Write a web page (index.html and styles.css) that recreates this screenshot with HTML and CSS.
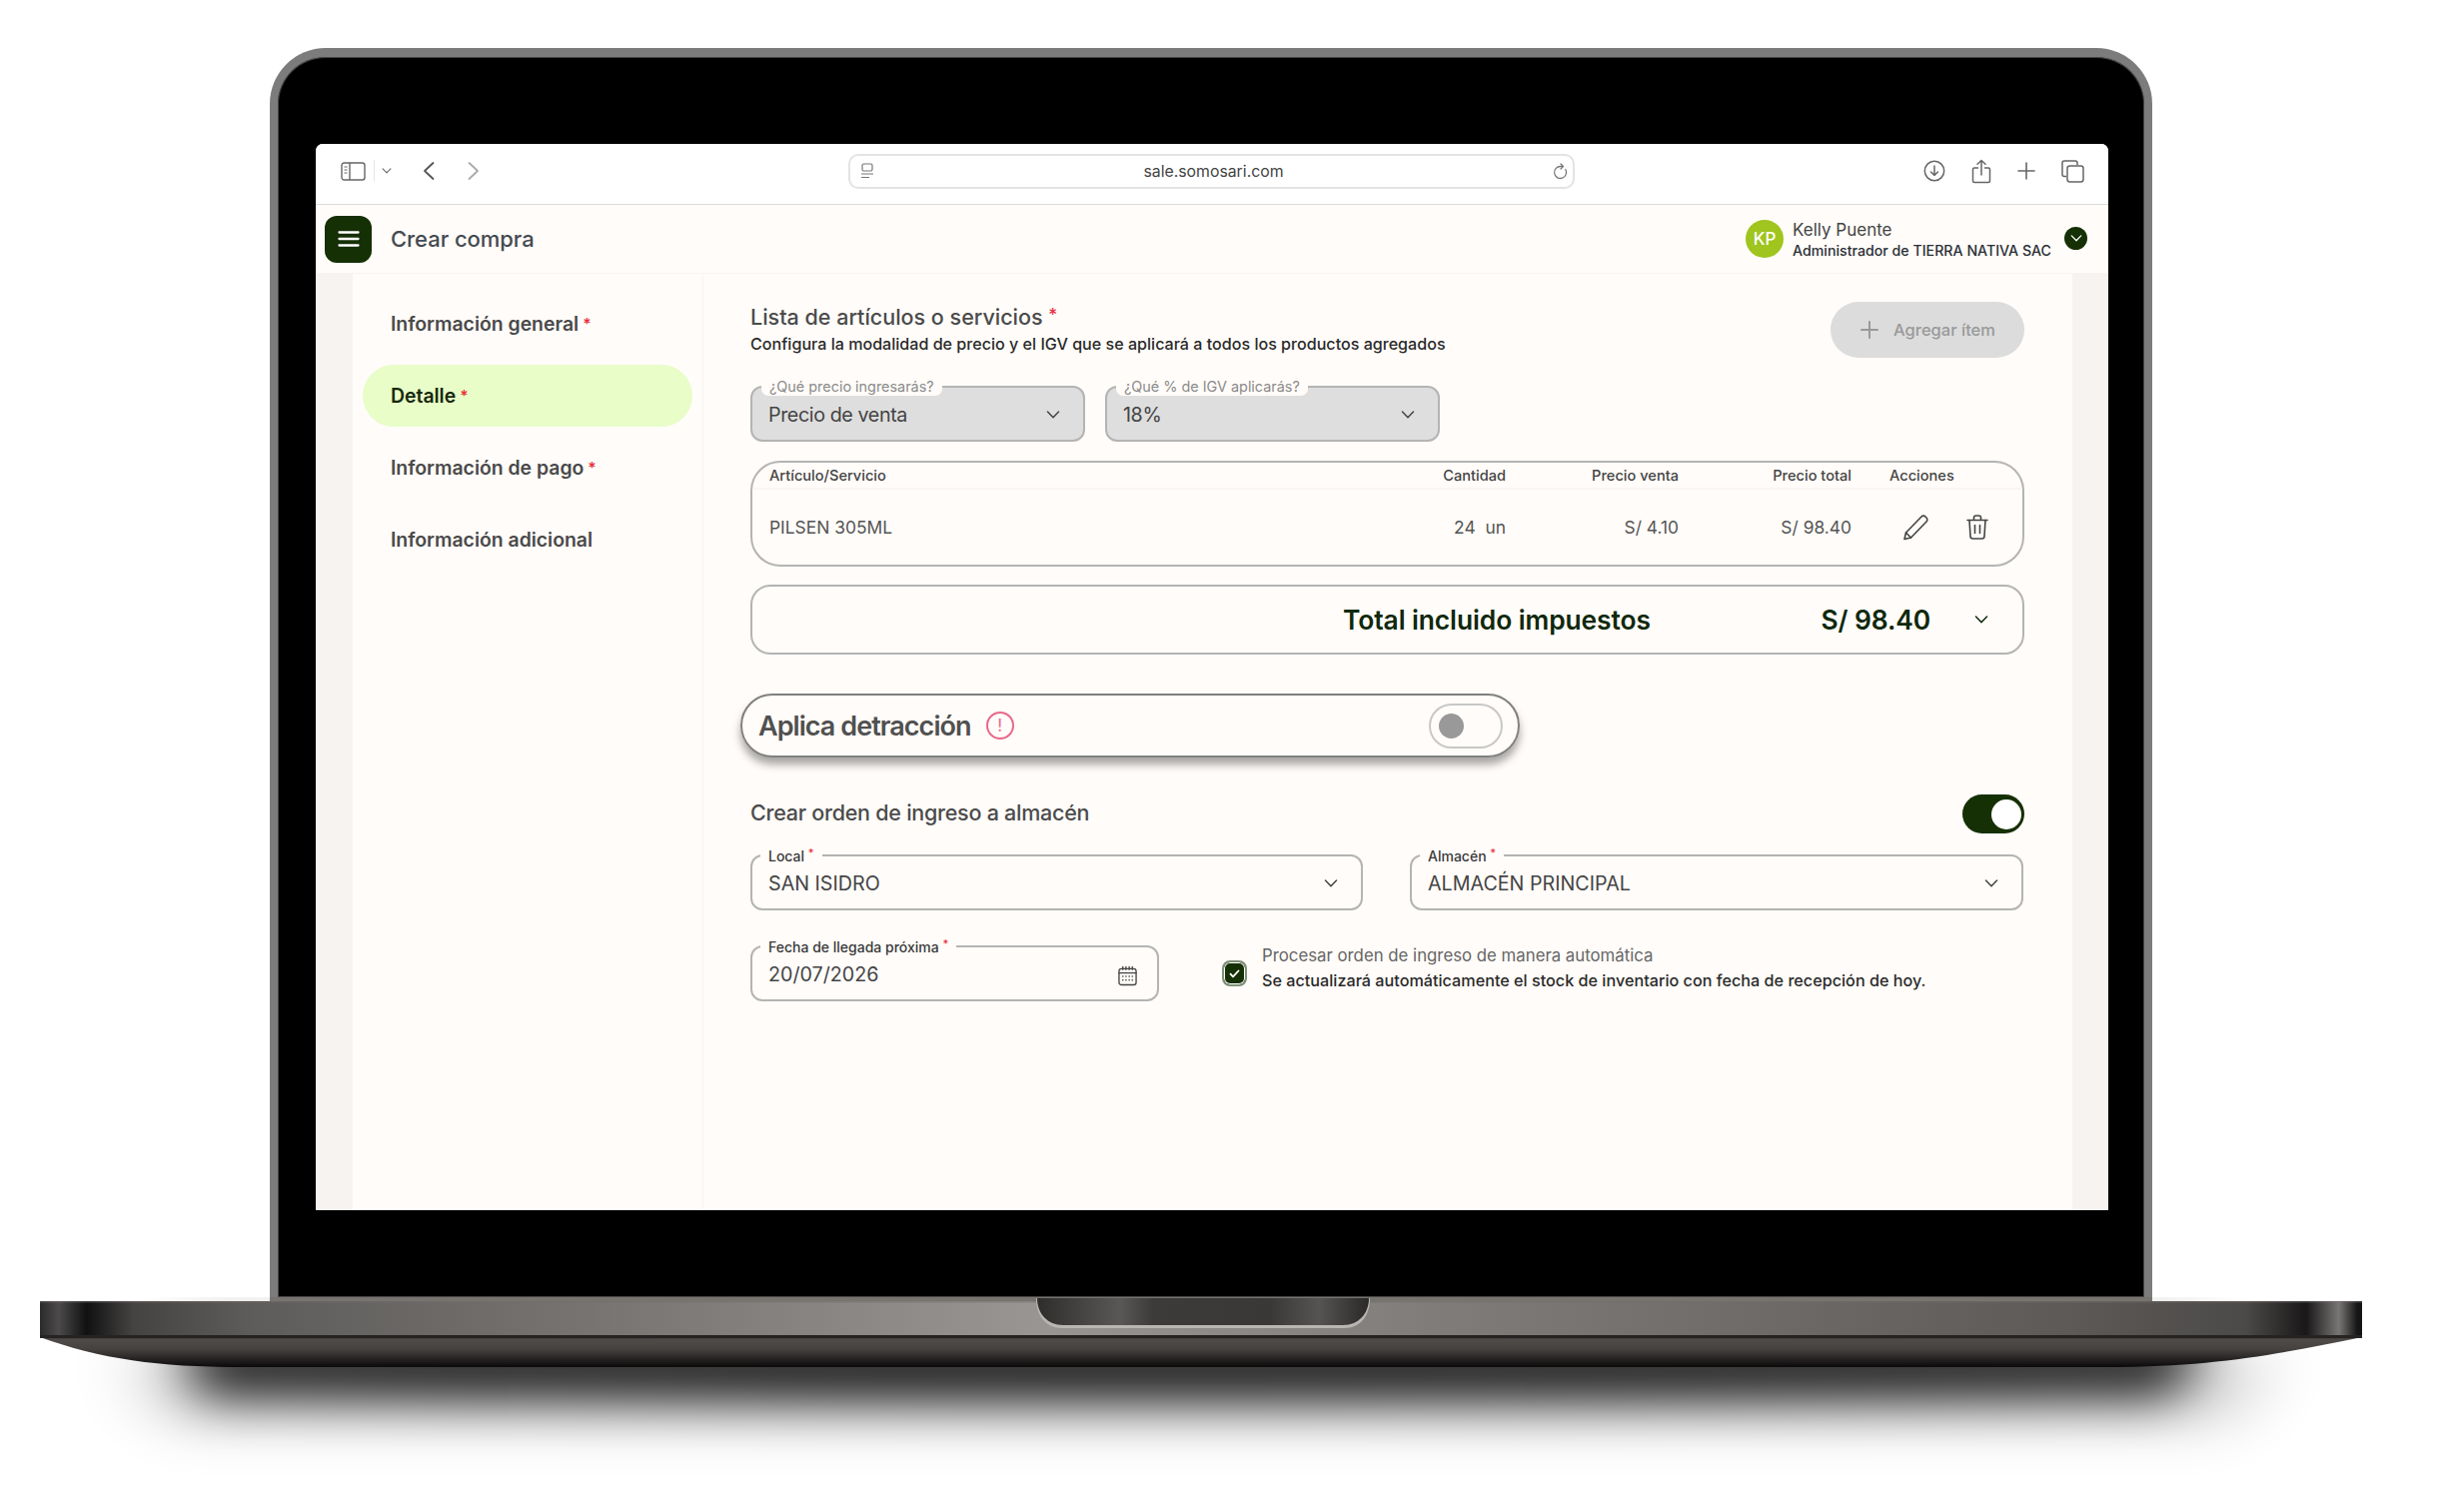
FILE: index.html
```html
<!DOCTYPE html>
<html lang="es">
<head>
    <meta charset="UTF-8">
    <title>Crear compra</title>
    <link rel="stylesheet" href="styles.css">
</head>
<body>

<svg class="defs" width="0" height="0">
    <symbol id="chev" viewBox="0 0 14 8"><path d="M1.5 1 7 6.7 12.5 1" fill="none" stroke="currentColor" stroke-width="1.5" stroke-linecap="round" stroke-linejoin="round"/></symbol>
</svg>

<div class="stage">
    <div class="lid">
        <div class="screen">

            <!-- Barra del navegador -->
            <div class="browser-bar">
                <div class="browser-left">
                    <svg class="icon-sidebar" width="25" height="19" viewBox="0 0 25 19" fill="none" stroke="#666" stroke-width="1.4"><rect x="1" y="1" width="23" height="17" rx="2.5"/><path d="M9 1v17"/><path d="M3.5 5h3M3.5 8h3M3.5 11h3" stroke-width="1.2"/></svg>
                    <span class="browser-sep"></span>
                    <svg class="icon-small-chev" width="10" height="6"><use href="#chev"/></svg>
                    <svg class="icon-back" width="12" height="20" viewBox="0 0 12 20" fill="none" stroke="#555" stroke-width="1.8" stroke-linecap="round" stroke-linejoin="round"><path d="M10.5 2 2 10l8.5 8"/></svg>
                    <svg class="icon-forward" width="12" height="20" viewBox="0 0 12 20" fill="none" stroke="#aaa" stroke-width="1.8" stroke-linecap="round" stroke-linejoin="round"><path d="M1.5 2 10 10l-8.5 8"/></svg>
                </div>
                <div class="url-bar">
                    <svg width="14" height="16" viewBox="0 0 14 16" fill="none" stroke="#777" stroke-width="1.2"><rect x="2" y="1" width="10" height="7" rx="1.5"/><path d="M1 11h12M1 14.5h8"/></svg>
                    <span class="url-text">sale.somosari.com</span>
                    <svg width="16" height="17" viewBox="0 0 16 17" fill="none" stroke="#777" stroke-width="1.3" stroke-linecap="round" stroke-linejoin="round"><path d="M12.8 6.5A6 6 0 1 1 8 3.5h2"/><path d="M8 1l2.5 2.5L8 6"/></svg>
                </div>
                <div class="browser-right">
                    <svg width="22" height="22" viewBox="0 0 22 22" fill="none" stroke="#666" stroke-width="1.5" stroke-linecap="round" stroke-linejoin="round"><circle cx="11" cy="11" r="9.7"/><path d="M11 6v9.5M7.5 12 11 15.5 14.5 12"/></svg>
                    <svg width="20" height="25" viewBox="0 0 20 25" fill="none" stroke="#666" stroke-width="1.5" stroke-linecap="round" stroke-linejoin="round"><path d="M6.5 9H3a1.5 1.5 0 0 0-1.5 1.5v11.5A1.5 1.5 0 0 0 3 23.5h14a1.5 1.5 0 0 0 1.5-1.5V10.5A1.5 1.5 0 0 0 17 9h-3.5"/><path d="M10 16V1.5M6 5.2l4-3.7 4 3.7"/></svg>
                    <svg width="18" height="18" viewBox="0 0 18 18" fill="none" stroke="#666" stroke-width="1.6" stroke-linecap="round"><path d="M9 1v16M1 9h16"/></svg>
                    <svg width="23" height="23" viewBox="0 0 23 23" fill="none" stroke="#666" stroke-width="1.5"><path d="M5 16.5H3a2 2 0 0 1-2-2V3a2 2 0 0 1 2-2h11a2 2 0 0 1 2 2v2"/><rect x="6" y="6" width="16" height="16" rx="2.5"/></svg>
                </div>
            </div>

            <!-- Encabezado -->
            <header class="app-header">
                <button class="menu-btn">
                    <svg width="22" height="18" viewBox="0 0 22 18" stroke="#fff" stroke-width="2.3" stroke-linecap="round"><path d="M1.5 2.5h19M1.5 9h19M1.5 15.5h19"/></svg>
                </button>
                <h1 class="page-title">Crear compra</h1>
                <div class="user">
                    <div class="avatar">KP</div>
                    <div class="user-info">
                        <div class="user-name">Kelly Puente</div>
                        <div class="user-role">Administrador de TIERRA NATIVA SAC</div>
                    </div>
                    <div class="user-chev"><svg width="12" height="7"><use href="#chev"/></svg></div>
                </div>
            </header>

            <div class="app-body">
                <nav class="sidebar">
                    <a class="nav-item">Información general <span class="req">*</span></a>
                    <a class="nav-item active">Detalle <span class="req">*</span></a>
                    <a class="nav-item">Información de pago <span class="req">*</span></a>
                    <a class="nav-item">Información adicional</a>
                </nav>

                <main class="main">
                    <div class="list-head">
                        <div class="list-text">
                            <h2 class="section-title">Lista de artículos o servicios <span class="req">*</span></h2>
                            <p class="section-sub">Configura la modalidad de precio y el IGV que se aplicará a todos los productos agregados</p>
                        </div>
                        <button class="add-btn">
                            <svg width="20" height="20" viewBox="0 0 20 20" stroke="#999" stroke-width="2" stroke-linecap="round"><path d="M10 2v16M2 10h16"/></svg>
                            Agregar ítem
                        </button>
                    </div>

                    <div class="price-selects">
                        <div class="field field-off">
                            <span class="field-label">¿Qué precio ingresarás?</span>
                            <span class="field-value">Precio de venta</span>
                            <svg class="chev" width="14" height="8"><use href="#chev"/></svg>
                        </div>
                        <div class="field field-off">
                            <span class="field-label">¿Qué % de IGV aplicarás?</span>
                            <span class="field-value">18%</span>
                            <svg class="chev" width="14" height="8"><use href="#chev"/></svg>
                        </div>
                    </div>

                    <div class="items">
                        <div class="items-row items-head">
                            <span>Artículo/Servicio</span>
                            <span class="num">Cantidad</span>
                            <span class="num">Precio venta</span>
                            <span class="num">Precio total</span>
                            <span class="col-actions">Acciones</span>
                        </div>
                        <div class="items-row items-line">
                            <span>PILSEN 305ML</span>
                            <span class="num">24&nbsp; un</span>
                            <span class="num">S/ 4.10</span>
                            <span class="num">S/ 98.40</span>
                            <span class="col-actions actions">
                                <svg width="27" height="26" viewBox="0 0 27 26" fill="none" stroke="#444" stroke-width="1.6" stroke-linecap="round" stroke-linejoin="round"><path d="M2 24.5 3.5 18 19 2a2.8 2.8 0 0 1 4 0l1 1a2.8 2.8 0 0 1 0 4L8.5 23Z"/><path d="m3.5 18 5 5"/></svg>
                                <svg width="22" height="25" viewBox="0 0 22 25" fill="none" stroke="#444" stroke-width="1.6" stroke-linecap="round" stroke-linejoin="round"><path d="M1 5.5h20M7.5 5.5V3a2 2 0 0 1 2-2h3a2 2 0 0 1 2 2v2.5"/><path d="M3 5.5 4 21.5A2.5 2.5 0 0 0 6.5 24h9a2.5 2.5 0 0 0 2.5-2.5l1-16"/><path d="M8.5 10.5v8M13.5 10.5v8"/></svg>
                            </span>
                        </div>
                    </div>

                    <div class="total">
                        <span class="total-label">Total incluido impuestos</span>
                        <span class="total-value">S/ 98.40</span>
                        <svg width="14" height="8"><use href="#chev"/></svg>
                    </div>

                    <div class="detraction">
                        <span class="detraction-label">Aplica detracción</span>
                        <span class="alert-icon">!</span>
                        <span class="switch-off"><span></span></span>
                    </div>

                    <div class="order-head">
                        <h2 class="section-title order-title">Crear orden de ingreso a almacén</h2>
                        <span class="switch-on"><span></span></span>
                    </div>

                    <div class="place-row">
                        <div class="field">
                            <span class="field-label label-dark">Local <span class="req">*</span></span>
                            <span class="field-value">SAN ISIDRO</span>
                            <svg class="chev" width="14" height="8"><use href="#chev"/></svg>
                        </div>
                        <div class="field">
                            <span class="field-label label-dark">Almacén <span class="req">*</span></span>
                            <span class="field-value">ALMACÉN PRINCIPAL</span>
                            <svg class="chev" width="14" height="8"><use href="#chev"/></svg>
                        </div>
                    </div>

                    <div class="date-row">
                        <div class="field field-date">
                            <span class="field-label label-dark">Fecha de llegada próxima <span class="req">*</span></span>
                            <span class="field-value">20/07/2026</span>
                            <svg class="calendar" width="19" height="21" viewBox="0 0 20 21" fill="none" stroke="#444" stroke-width="1.4" stroke-linecap="round"><rect x="1" y="3" width="18" height="17" rx="2.5"/><path d="M1 7.5h18"/><path d="M5 1v3M8.3 1v3M11.7 1v3M15 1v3"/><path d="M5 11h.1M8.3 11h.1M11.7 11h.1M15 11h.1M5 15h.1M8.3 15h.1M11.7 15h.1M15 15h.1" stroke-width="1.7"/></svg>
                        </div>
                        <div class="auto-check">
                            <span class="checkbox"><svg width="11" height="9" viewBox="0 0 11 9" fill="none" stroke="#fff" stroke-width="1.8" stroke-linecap="round" stroke-linejoin="round"><path d="M1.5 4.7 4 7.3 9.5 1.5"/></svg></span>
                            <div class="auto-text">
                                <div class="auto-title">Procesar orden de ingreso de manera automática</div>
                                <div class="auto-sub">Se actualizará automáticamente el stock de inventario con fecha de recepción de hoy.</div>
                            </div>
                        </div>
                    </div>
                </main>
            </div>
        </div>
    </div>

    <!-- Base del portátil y sombra (coordenadas de la página) -->
    <svg class="base" width="2466" height="214" viewBox="0 1298 2466 214">
        <defs>
            <filter id="blur-big" filterUnits="userSpaceOnUse" x="0" y="1200" width="2466" height="400"><feGaussianBlur stdDeviation="26"/></filter>
            <filter id="blur-soft" filterUnits="userSpaceOnUse" x="0" y="1200" width="2466" height="400"><feGaussianBlur stdDeviation="30"/></filter>
            <linearGradient id="band">
                <stop offset="0" stop-color="#2c2b2b"/>
                <stop offset=".008" stop-color="#4c4a4a"/>
                <stop offset=".02" stop-color="#111"/>
                <stop offset=".04" stop-color="#454342"/>
                <stop offset=".09" stop-color="#5e5c5a"/>
                <stop offset=".27" stop-color="#7c7977"/>
                <stop offset=".43" stop-color="#999592"/>
                <stop offset=".6" stop-color="#807c7a"/>
                <stop offset=".87" stop-color="#5d5a58"/>
                <stop offset=".95" stop-color="#4c4a48"/>
                <stop offset=".976" stop-color="#191818"/>
                <stop offset=".99" stop-color="#787675"/>
                <stop offset=".998" stop-color="#151515"/>
            </linearGradient>
            <linearGradient id="under" x1="0" y1="0" x2="0" y2="1">
                <stop offset="0" stop-color="#2b2928"/>
                <stop offset=".15" stop-color="#4f4b49"/>
                <stop offset=".45" stop-color="#45413f"/>
                <stop offset="1" stop-color="#0b0a0a"/>
            </linearGradient>
            <linearGradient id="notch">
                <stop offset="0" stop-color="#2f2d2c"/>
                <stop offset=".25" stop-color="#5a5856"/>
                <stop offset=".35" stop-color="#3d3b3a"/>
                <stop offset=".7" stop-color="#3a3837"/>
                <stop offset=".85" stop-color="#565452"/>
                <stop offset="1" stop-color="#2a2928"/>
            </linearGradient>
        </defs>
        <path d="M175 1340H2215L2170 1394Q1200 1402 205 1394Z" fill="#000" filter="url(#blur-big)"/>
        <path d="M110 1360H2290L2230 1420H170Z" fill="#000" opacity=".18" filter="url(#blur-soft)"/>
        <path d="M40 1336H2364V1338C2290 1353 2220 1368 2110 1368H240C160 1368 100 1360 40 1338Z" fill="url(#under)"/>
        <rect x="40" y="1302" width="2324" height="35" fill="url(#band)"/>
        <rect x="270" y="1298" width="1884" height="4" fill="#77736f"/>
        <rect x="40" y="1302" width="2324" height="1.5" fill="#6f6c6a" opacity=".5"/>
        <rect x="40" y="1336" width="2324" height="3" fill="#262423"/>
        <path d="M1037 1299H1371C1371 1316 1362 1329 1345 1329H1063C1046 1329 1037 1316 1037 1299Z" fill="#b9b6b2"/>
        <path d="M1038 1299H1370C1370 1314 1360 1326 1344 1326H1064C1048 1326 1038 1314 1038 1299Z" fill="url(#notch)"/>
    </svg>
</div>

</body>
</html>
```

FILE: styles.css
```css
* {
    box-sizing: border-box;
}

body {
    margin: 0;
    background-color: #fff;
    font-family: Inter, "Liberation Sans", sans-serif;
    color: #454545;
    overflow: hidden;
}

.defs {
    display: block;
    height: 0;
}

.stage {
    padding-top: 48px;
    height: 1512px;
}

/* Tapa del portátil */
.lid {
    width: 1884px;
    height: 1250px;
    margin-left: 270px;
    padding: 87px 36px 0 38px;
    background-color: #000;
    border: 8px solid #7c7c7c;
    border-top-width: 9px;
    border-bottom: 0;
    border-radius: 56px 56px 0 0;
    box-shadow: inset 0 0 0 1px #444;
}

.screen {
    height: 1067px;
    background-color: #fffcf9;
    border-radius: 7px 7px 0 0;
    overflow: hidden;
    display: flex;
    flex-direction: column;
}

.base {
    display: block;
}

/* Barra del navegador */
.browser-bar {
    height: 61px;
    flex: none;
    background-color: #fff;
    border-bottom: 1px solid #dcdcdc;
    display: flex;
    align-items: center;
    padding-bottom: 6px;
}

.browser-left {
    width: 533px;
    display: flex;
    align-items: center;
    padding-left: 25px;
}

.browser-sep {
    width: 1px;
    height: 22px;
    margin-left: 8px;
    background-color: #e6e6e6;
}

.icon-small-chev {
    margin-left: 7px;
    color: #666;
}

.icon-back {
    margin-left: 31px;
}

.icon-forward {
    margin-left: 33px;
}

.url-bar {
    width: 727px;
    height: 35px;
    border: 2px solid #e3e3e3;
    border-radius: 10px;
    display: flex;
    align-items: center;
    justify-content: space-between;
    padding: 0 4px 0 10px;
}

.url-text {
    font-size: 15.8px;
    color: #444;
}

.browser-right {
    flex: 1;
    display: flex;
    align-items: center;
    justify-content: flex-end;
    gap: 26px;
    padding-right: 24px;
}

/* Encabezado de la app */
.app-header {
    height: 69px;
    flex: none;
    display: flex;
    align-items: center;
    padding: 0 21px 0 9px;
    border-bottom: 1px solid #f8f5f1;
}

.menu-btn {
    width: 47px;
    height: 47px;
    border: 0;
    border-radius: 12px;
    background-color: #163006;
    display: flex;
    align-items: center;
    justify-content: center;
}

.page-title {
    margin: 0 0 0 19px;
    font-size: 22px;
    font-weight: 500;
    letter-spacing: -0.05px;
    color: #454a50;
}

.user {
    margin-left: auto;
    display: flex;
    align-items: center;
}

.avatar {
    width: 38px;
    height: 38px;
    border-radius: 50%;
    background-color: #9fc51e;
    color: #fff;
    font-size: 17px;
    font-weight: 500;
    display: flex;
    align-items: center;
    justify-content: center;
}

.user-info {
    margin: 2px 0 0 9px;
}

.user-name {
    font-size: 17px;
    line-height: 21px;
    color: #444;
}

.user-role {
    font-size: 14.2px;
    line-height: 19px;
    font-weight: 500;
    color: #2a2f36;
}

.user-chev {
    width: 23px;
    height: 23px;
    margin: -2px 0 0 13px;
    border-radius: 50%;
    background-color: #163006;
    color: #fff;
    display: flex;
    align-items: center;
    justify-content: center;
}

/* Cuerpo */
.app-body {
    flex: 1;
    display: flex;
    padding: 0 36px 0 37px;
    background-color: #f6f3f0;
}

.sidebar {
    width: 351px;
    flex: none;
    padding: 19px 10px 0;
    background-color: #fffcf9;
    border-right: 1px solid #f8f5f2;
    display: flex;
    flex-direction: column;
    gap: 10px;
}

.nav-item {
    height: 62px;
    padding-left: 28px;
    border-radius: 31px;
    display: flex;
    align-items: center;
    gap: 4px;
    font-size: 19.4px;
    font-weight: 600;
    color: #4a4a4a;
}

.nav-item.active {
    background-color: #e8fdc8;
    color: #16280c;
}

.req {
    color: #e8303f;
    font-size: 0.8em;
    vertical-align: 4px;
}

.main {
    flex: 1;
    padding: 28px 48px 0 47px;
    background-color: #fffcf9;
}

.list-head {
    height: 56px;
    display: flex;
    justify-content: space-between;
}

.list-text {
    margin-top: -1px;
}

.section-title {
    margin: 0;
    font-size: 21.5px;
    line-height: 27px;
    font-weight: 500;
    color: #4b4b4b;
}

.order-title {
    margin-bottom: 2px;
    letter-spacing: -0.25px;
}

.section-sub {
    margin: 0;
    font-size: 16.1px;
    line-height: 27px;
    font-weight: 500;
    color: #2a2a2a;
}

.add-btn {
    width: 194px;
    height: 56px;
    border: 0;
    border-radius: 28px;
    background-color: #dcdcdc;
    color: #999;
    font-family: inherit;
    font-size: 16.5px;
    font-weight: 500;
    display: flex;
    align-items: center;
    justify-content: center;
    gap: 14px;
}

/* Campos con etiqueta sobre el borde */
.field {
    position: relative;
    height: 56px;
    border: 2px solid #b4b4b4;
    border-radius: 12px;
    padding: 0 23px 0 16px;
    display: flex;
    align-items: center;
    justify-content: space-between;
    color: #444;
}

.field-off {
    width: 335px;
    background-color: #dedede;
}

.field-label {
    position: absolute;
    left: 9px;
    top: -10px;
    padding: 0 8px;
    background-color: #fffcf9;
    border-radius: 0 0 7px 7px;
    font-size: 14.4px;
    line-height: 18px;
    color: #8b8b8b;
    white-space: nowrap;
}

.label-dark {
    left: 8px;
    top: -12px;
    font-size: 14px;
    font-weight: 500;
    color: #3a3a3a;
}

.field-value {
    font-size: 19.7px;
    padding-top: 1px;
}

.field-off .field-value {
    letter-spacing: -0.4px;
}

.chev {
    margin-top: 2px;
}

.price-selects {
    margin-top: 28px;
    display: flex;
    gap: 20px;
}

/* Tabla de artículos */
.items {
    margin-top: 19px;
    height: 106px;
    border: 2px solid #b4b4b4;
    border-radius: 30px;
}

.items-row {
    display: grid;
    grid-template-columns: 1fr 120px 173px 173px 171px;
    align-items: center;
    padding-left: 17px;
}

.items-head {
    height: 27px;
    font-size: 14.6px;
    font-weight: 500;
    color: #444;
    border-bottom: 2px solid #f9f6f3;
}

.items-line {
    height: 75px;
    font-size: 17.4px;
    color: #555;
}

.num {
    text-align: right;
}

.col-actions {
    padding-left: 38px;
}

.actions {
    display: flex;
    align-items: center;
    gap: 37px;
    padding-left: 51px;
}

.total {
    margin-top: 18px;
    height: 70px;
    border: 2px solid #b4b4b4;
    border-radius: 20px;
    display: flex;
    align-items: center;
    padding: 0 34px 0 591px;
    font-size: 26.4px;
    font-weight: 600;
    letter-spacing: -0.1px;
    color: #10280c;
}

.total-value {
    margin-left: auto;
    margin-right: 44px;
}

.detraction {
    margin: 39px 0 0 -10px;
    width: 780px;
    height: 64px;
    border: 2px solid #808080;
    border-radius: 32px;
    box-shadow: 0 7px 8px rgba(0, 0, 0, 0.35);
    display: flex;
    align-items: center;
    padding: 0 15px 0 16px;
}

.detraction-label {
    font-size: 27px;
    font-weight: 600;
    letter-spacing: -0.95px;
    color: #505050;
}

.alert-icon {
    width: 28px;
    height: 28px;
    margin-left: 15px;
    border: 2px solid #e8698c;
    border-radius: 50%;
    color: #e8698c;
    font-size: 17px;
    text-align: center;
    line-height: 24px;
}

.switch-off {
    margin-left: auto;
    width: 74px;
    height: 45px;
    border: 2px solid #c8c8c8;
    border-radius: 23px;
    display: flex;
    align-items: center;
    padding-left: 8px;
}

.switch-off span {
    width: 25px;
    height: 25px;
    border-radius: 50%;
    background-color: #999;
}

.order-head {
    margin-top: 37px;
    height: 39px;
    display: flex;
    align-items: center;
    justify-content: space-between;
}

.switch-on {
    width: 62px;
    height: 39px;
    border-radius: 20px;
    background-color: #163006;
    display: flex;
    align-items: center;
    justify-content: flex-end;
    padding-right: 3px;
}

.switch-on span {
    width: 30px;
    height: 30px;
    border-radius: 50%;
    background-color: #fff;
}

.place-row {
    margin-top: 21px;
    display: grid;
    grid-template-columns: 613px 614px;
    gap: 47px;
}

.date-row {
    margin-top: 35px;
    display: flex;
    align-items: flex-start;
}

.field-date {
    width: 409px;
    padding-right: 20px;
}

.calendar {
    margin-top: 4px;
}

.auto-check {
    height: 56px;
    margin-left: 63px;
    display: flex;
    align-items: center;
    gap: 15px;
}

.auto-text {
    margin-top: -11px;
}

.checkbox {
    width: 25px;
    height: 26px;
    border-radius: 8px;
    background-color: #163006;
    border: 2px solid #7f917a;
    box-shadow: inset 0 0 0 1px #fff;
    display: flex;
    align-items: center;
    justify-content: center;
}

.auto-title {
    font-size: 16.8px;
    line-height: 24.5px;
    color: #666;
}

.auto-sub {
    font-size: 16.2px;
    line-height: 24.5px;
    font-weight: 500;
    color: #2a2a2a;
}
```
